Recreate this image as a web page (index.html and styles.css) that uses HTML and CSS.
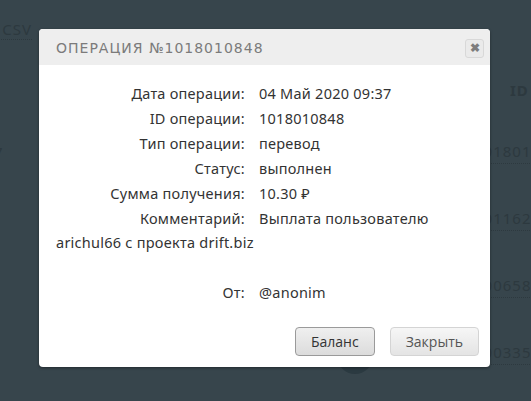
FILE: index.html
```html
<!DOCTYPE html>
<html>

<head>
  <meta charset="utf-8">
  <title>Операция №1018010848</title>
  <link rel="stylesheet" href="styles.css">
</head>

<body>
  <div class="page">
    <div class="toolbar"><a class="export">в CSV</a></div>
    <div class="history">
      <div class="row head"><span class="left"></span><span class="id">ID</span></div>
      <div class="row"><span class="left">7</span><span class="id">1018010848</span></div>
      <div class="row"><span class="left"></span><span class="id">1011629473</span></div>
      <div class="row"><span class="left"></span><span class="id">1006586217</span></div>
      <div class="row"><span class="left"></span><span class="avatar"></span><span class="id">1003355902</span></div>
    </div>
  </div>

  <div class="modal">
    <div class="modal-header">
      <h3>Операция №1018010848</h3>
      <button class="close">&#10006;</button>
    </div>
    <div class="modal-body">
      <div><span class="label">Дата операции:</span>04 Май 2020 09:37</div>
      <div><span class="label">ID операции:</span>1018010848</div>
      <div><span class="label">Тип операции:</span>перевод</div>
      <div><span class="label">Статус:</span>выполнен</div>
      <div><span class="label">Сумма получения:</span>10.30 &#8381;</div>
      <div><span class="label">Комментарий:</span>Выплата пользователю arichul66 с проекта drift.biz</div>
      <br>
      <div><span class="label">От:</span>@anonim</div>
    </div>
    <div class="modal-footer">
      <button class="btn active">Баланс</button>
      <button class="btn">Закрыть</button>
    </div>
  </div>
</body>

</html>
```

FILE: styles.css
```css
body {
  margin: 0;
  background: #37454c;
  font-family: "Noto Sans", sans-serif;
  overflow: hidden;
}

/* page under the overlay */
.page {
  height: 401px;
  color: #2d393f;
}

.toolbar {
  padding: 18px 0 0 0;
  margin-left: -12px;
  height: 40px;
  box-sizing: border-box;
}

.export {
  font-size: 15px;
  letter-spacing: 1px;
  border-bottom: 1px dotted #2d393f;
}

.history .row {
  display: flex;
  align-items: center;
  height: 67px;
  font-size: 15px;
  letter-spacing: 1px;
}

.history .row.head {
  height: 56px;
  margin-top: 22px;
}

.history .left {
  flex-shrink: 0;
  width: 480px;
  margin-left: -6px;
}

.history .id {
  flex-shrink: 0;
  border-bottom: 1px dotted #2d393f;
  white-space: nowrap;
  line-height: 24px;
}

.history .head .id {
  border: 0;
  font-weight: bold;
  margin-left: 36px;
}

.avatar {
  flex-shrink: 0;
  align-self: flex-start;
  width: 36px;
  height: 36px;
  border-radius: 50%;
  background: #2b3a41;
  margin: 19px 101px 0 -137px;
}

/* dialog */
.modal {
  position: absolute;
  left: 39px;
  top: 29px;
  width: 451px;
  background: #fff;
  border-radius: 4px;
  box-shadow: 0 1px 3px rgba(0, 0, 0, 0.4);
  overflow: hidden;
}

.modal-header {
  display: flex;
  align-items: center;
  justify-content: space-between;
  height: 36px;
  padding: 0 6px 0 17px;
  background: #eeeeee;
}

.modal-header h3 {
  margin: 2px 0 0 0;
  font-family: "DejaVu Sans", sans-serif;
  font-size: 14px;
  font-weight: normal;
  letter-spacing: 1px;
  text-transform: uppercase;
  color: #7b7b7b;
}

.close {
  width: 19px;
  height: 19px;
  margin-top: 2px;
  padding: 0;
  border: 1px solid #d8d8d8;
  border-radius: 3px;
  background: #eaeaea;
  color: #7d7d7d;
  font-size: 12px;
  font-weight: bold;
  line-height: 17px;
}

.modal-body {
  padding: 16px 17px 0 17px;
  font-size: 14.5px;
  letter-spacing: 0.25px;
  line-height: 24.9px;
  color: #333;
}

.label {
  display: inline-block;
  width: 189px;
  margin-right: 14px;
  text-align: right;
}

.modal-footer {
  display: flex;
  justify-content: flex-end;
  gap: 15px;
  padding: 22px 11px 11px 0;
}

.btn {
  height: 29px;
  padding: 0 15px;
  font-family: "Open Sans", sans-serif;
  font-size: 14px;
  color: #555;
  background: linear-gradient(#f6f6f6, #e4e4e4);
  border: 1px solid #d4d4d4;
  border-radius: 4px;
}

.btn.active {
  color: #333;
  border-color: #9a9a9a;
  background: linear-gradient(#efefef, #dcdcdc);
}
```
